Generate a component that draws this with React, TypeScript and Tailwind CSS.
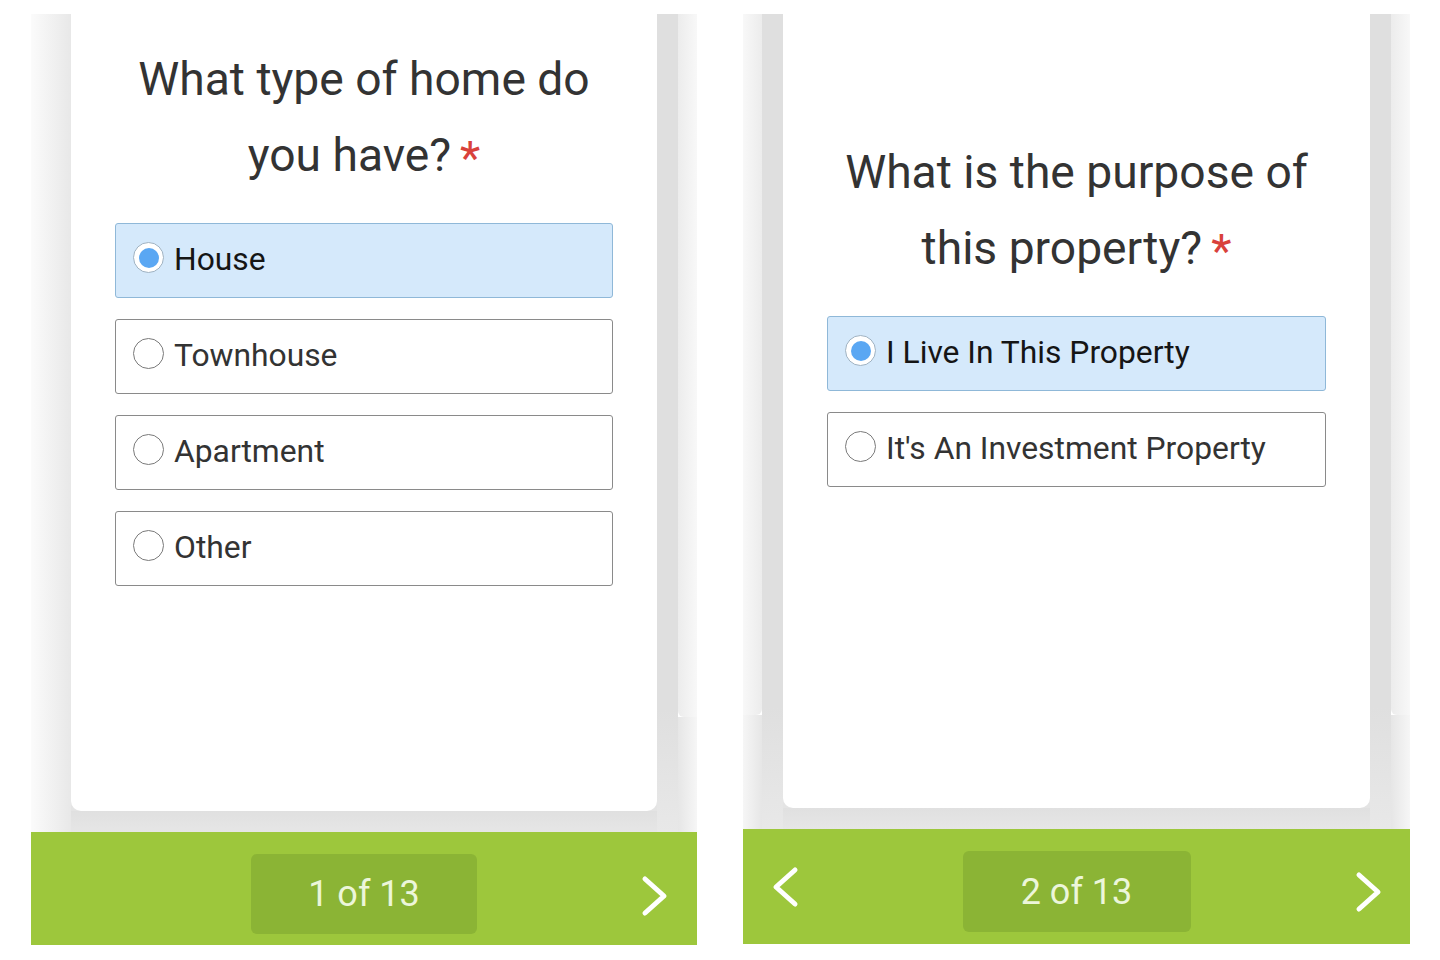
import React from "react";

const font = { fontFamily: "Roboto, 'Noto Sans', sans-serif" };

function Radio({ checked }: { checked: boolean }) {
  if (checked) {
    return (
      <div className="w-[31px] h-[31px] shrink-0 rounded-full border border-[#9fb2c2] bg-white flex items-center justify-center -mt-[6px]">
        <div className="w-[20px] h-[20px] rounded-full bg-[#5aa7f3]" />
      </div>
    );
  }
  return <div className="w-[31px] h-[31px] shrink-0 rounded-full border-[1.5px] border-[#7a7a7a] bg-white -mt-[6px]" />;
}

function Option({ label, checked }: { label: string; checked: boolean }) {
  return (
    <div
      className={
        "h-[75px] rounded-[3px] flex items-center pl-[17px] gap-[10px] " +
        (checked
          ? "bg-[#d5e9fb] border-[1.5px] border-[#8fb8d8]"
          : "bg-white border-[1.5px] border-[#8a8a8a]")
      }
    >
      <Radio checked={checked} />
      <span className={"text-[31.8px] leading-none -mt-[2px] " + (checked ? "text-[#151515]" : "text-[#333333]")}>{label}</span>
    </div>
  );
}

function Question({ l1, l2 }: { l1: string; l2: string }) {
  return (
    <div className="text-center text-[46.2px] leading-[75px] text-[#333333]">
      <div>{l1}</div>
      <div>
        {l2}
        <span className="relative top-[3px] ml-[9px] text-[#d9413b] text-[47px]">*</span>
      </div>
    </div>
  );
}

function Chevron({ dir }: { dir: "left" | "right" }) {
  return (
    <svg width="27" height="42" viewBox="0 0 27 42" fill="none">
      {dir === "right" ? (
        <polyline points="4,4 23,21 4,38" stroke="#ffffff" strokeWidth="5" strokeLinecap="round" strokeLinejoin="round" />
      ) : (
        <polyline points="23,4 4,21 23,38" stroke="#ffffff" strokeWidth="5" strokeLinecap="round" strokeLinejoin="round" />
      )}
    </svg>
  );
}

function Peek({ side, h }: { side: "left" | "right"; h: number }) {
  return (
    <div className="w-[19px] flex flex-col self-stretch">
      <div
        className={
          side === "right"
            ? "w-full bg-[linear-gradient(to_right,#ececec,#f8f8f8)] rounded-bl-[6px]"
            : "w-full bg-[linear-gradient(to_left,#ececec,#f8f8f8)] rounded-br-[6px]"
        }
        style={{ height: h }}
      />
      <div
        className={
          side === "right"
            ? "flex-1 bg-[linear-gradient(to_right,#e6e6e6,#f6f6f6)]"
            : "flex-1 bg-[linear-gradient(to_left,#e6e6e6,#f6f6f6)]"
        }
      />
    </div>
  );
}

function Strip() {
  return <div className="w-[21px] self-stretch bg-[linear-gradient(to_bottom,#dfdfdf_0%,#dfdfdf_85%,#e8e8e8_100%)]" />;
}

export default function App() {
  return (
    <div className="w-[1440px] h-[960px] bg-white flex pt-[14px] pl-[31px] gap-[46px]" style={font}>
      {/* Left panel */}
      <div className="w-[666px] flex flex-col">
        <div className="h-[818px] flex">
          <div className="w-[40px] self-stretch bg-[linear-gradient(to_right,#fbfbfb,#e8e8e8)]" />
          <div className="w-[586px] flex flex-col bg-[#e4e4e4]">
            <div className="h-[797px] bg-white rounded-b-[10px] px-[44px] pt-[28px]">
              <Question l1="What type of home do" l2="you have?" />
              <div className="mt-[30px] flex flex-col gap-[21px]">
                <Option label="House" checked />
                <Option label="Townhouse" checked={false} />
                <Option label="Apartment" checked={false} />
                <Option label="Other" checked={false} />
              </div>
            </div>
            <div className="flex-1 bg-[linear-gradient(to_bottom,#e0e0e0,#e6e6e6)]" />
          </div>
          <Strip />
          <Peek side="right" h={703} />
        </div>
        <div className="h-[113px] bg-[#9dc73c] relative flex justify-center pt-[22px]">
          <div className="w-[226px] h-[80px] rounded-[6px] bg-[#8bb435] flex items-center justify-center text-[36px] text-[#ecf6da]">
            1 of 13
          </div>
          <div className="absolute right-[29px] top-[43px]">
            <Chevron dir="right" />
          </div>
        </div>
      </div>

      {/* Right panel */}
      <div className="w-[667px] flex flex-col">
        <div className="h-[815px] flex">
          <Peek side="left" h={701} />
          <Strip />
          <div className="w-[587px] flex flex-col bg-[#e4e4e4]">
            <div className="h-[794px] bg-white rounded-b-[10px] px-[44px] pt-[121px]">
              <Question l1="What is the purpose of" l2="this property?" />
              <div className="mt-[30px] flex flex-col gap-[21px]">
                <Option label="I Live In This Property" checked />
                <Option label="It's An Investment Property" checked={false} />
              </div>
            </div>
            <div className="flex-1 bg-[linear-gradient(to_bottom,#e0e0e0,#e6e6e6)]" />
          </div>
          <Strip />
          <Peek side="right" h={701} />
        </div>
        <div className="h-[115px] bg-[#9dc73c] relative flex justify-center pt-[22px]">
          <div className="w-[228px] h-[81px] rounded-[6px] bg-[#8bb435] flex items-center justify-center text-[36px] text-[#ecf6da]">
            2 of 13
          </div>
          <div className="absolute left-[29px] top-[37px]">
            <Chevron dir="left" />
          </div>
          <div className="absolute right-[28px] top-[42px]">
            <Chevron dir="right" />
          </div>
        </div>
      </div>
    </div>
  );
}
